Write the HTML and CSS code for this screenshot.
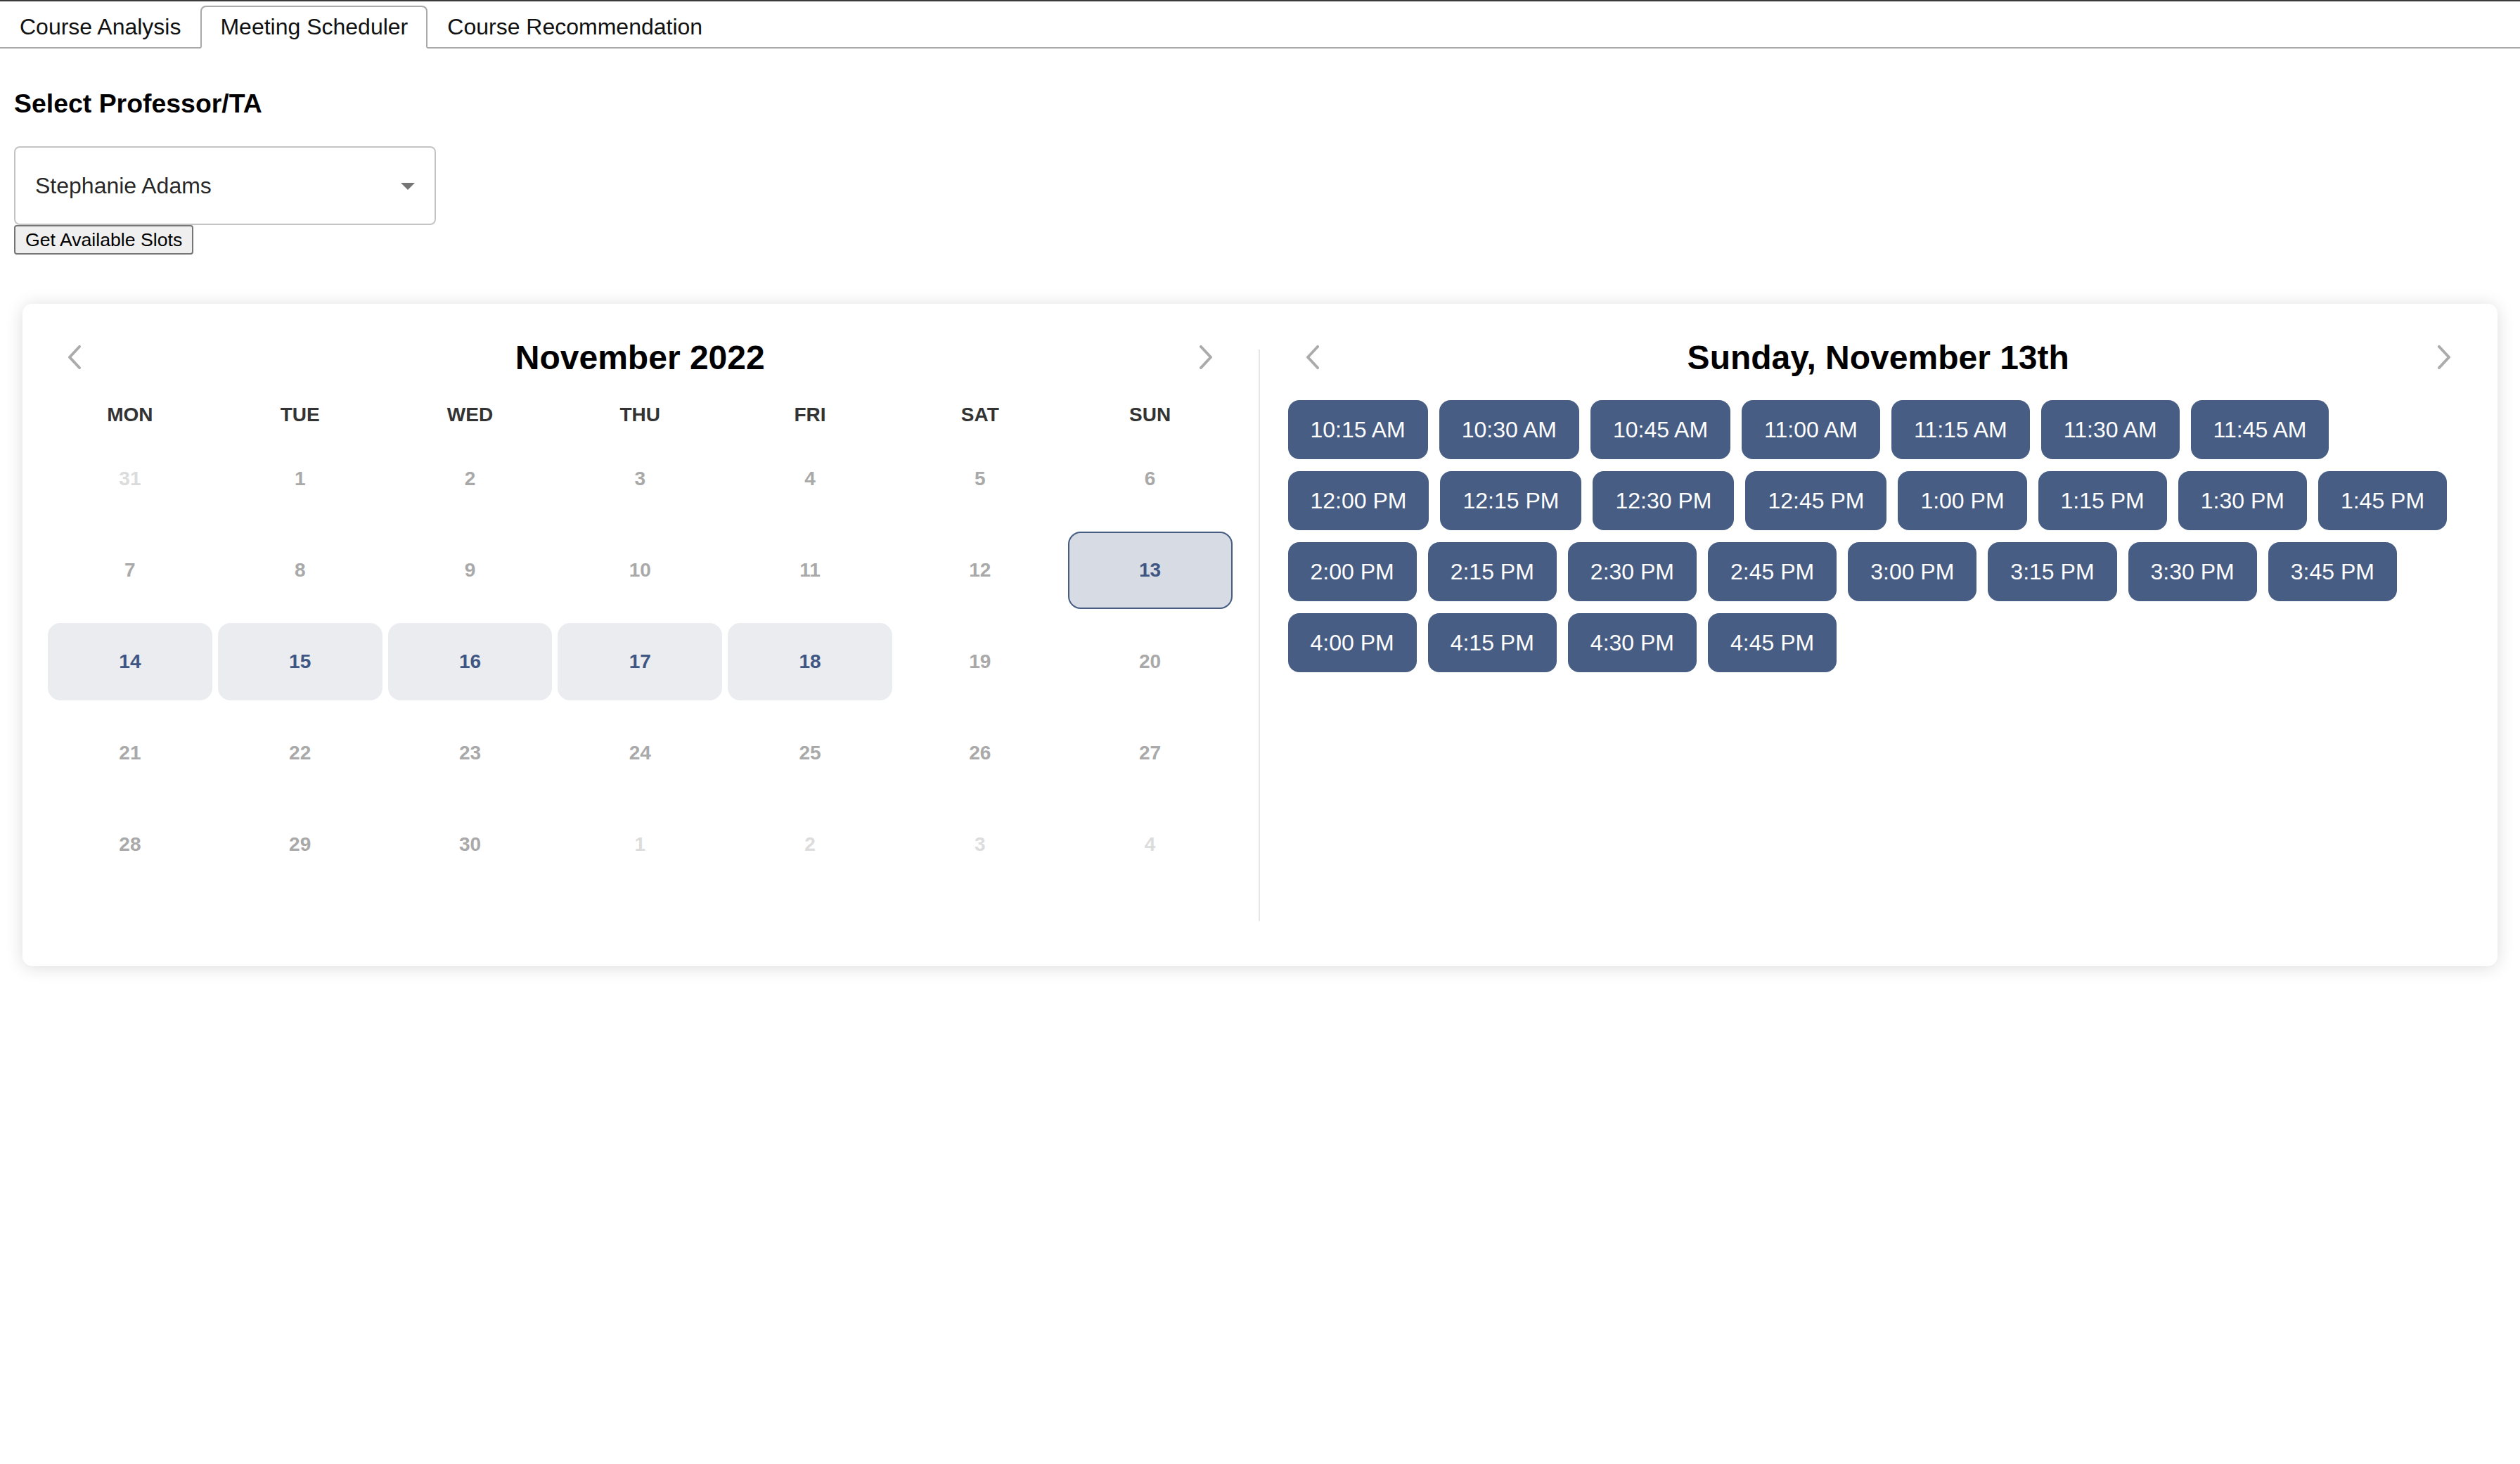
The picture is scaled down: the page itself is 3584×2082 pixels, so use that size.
FILE: index.html
```html
<!DOCTYPE html>
<html>
<head lang="en">
    <meta charset="UTF-8">
    <title>Meeting Scheduler</title>
    <link rel="stylesheet" href="styles.css">
</head>
<body>
<div class="tab">
    <button class="tablinks">Course Analysis</button>
    <button class="tablinks active">Meeting Scheduler</button>
    <button class="tablinks">Course Recommendation</button>
</div>

<div class="tabcontent">
    <h3>Select Professor/TA</h3>
    <div class="select">
        <span>Stephanie Adams</span>
        <svg viewBox="0 0 24 24"><path d="M7 10l5 5 5-5z"></path></svg>
    </div>
    <button class="get-slots">Get Available Slots</button>

    <div class="scheduler">
        <div class="calendar">
            <div class="head">
                <svg class="arrow" viewBox="0 0 20 34"><polyline points="17,2 3,17 17,32"></polyline></svg>
                <span class="title">November 2022</span>
                <svg class="arrow" viewBox="0 0 20 34"><polyline points="3,2 17,17 3,32"></polyline></svg>
            </div>
            <div class="days">
                <div class="dow">MON</div><div class="dow">TUE</div><div class="dow">WED</div><div class="dow">THU</div>
                <div class="dow">FRI</div><div class="dow">SAT</div><div class="dow">SUN</div>

                <div class="day other">31</div><div class="day">1</div><div class="day">2</div><div class="day">3</div>
                <div class="day">4</div><div class="day">5</div><div class="day">6</div>

                <div class="day">7</div><div class="day">8</div><div class="day">9</div><div class="day">10</div>
                <div class="day">11</div><div class="day">12</div><div class="day avail selected">13</div>

                <div class="day avail">14</div><div class="day avail">15</div><div class="day avail">16</div><div class="day avail">17</div>
                <div class="day avail">18</div><div class="day">19</div><div class="day">20</div>

                <div class="day">21</div><div class="day">22</div><div class="day">23</div><div class="day">24</div>
                <div class="day">25</div><div class="day">26</div><div class="day">27</div>

                <div class="day">28</div><div class="day">29</div><div class="day">30</div><div class="day other">1</div>
                <div class="day other">2</div><div class="day other">3</div><div class="day other">4</div>
            </div>
        </div>

        <div class="divider"></div>

        <div class="slots-panel">
            <div class="head">
                <svg class="arrow" viewBox="0 0 20 34"><polyline points="17,2 3,17 17,32"></polyline></svg>
                <span class="title">Sunday, November 13th</span>
                <svg class="arrow" viewBox="0 0 20 34"><polyline points="3,2 17,17 3,32"></polyline></svg>
            </div>
            <div class="slots">
                <button class="slot">10:15 AM</button>
                <button class="slot">10:30 AM</button>
                <button class="slot">10:45 AM</button>
                <button class="slot">11:00 AM</button>
                <button class="slot">11:15 AM</button>
                <button class="slot">11:30 AM</button>
                <button class="slot">11:45 AM</button>
                <button class="slot">12:00 PM</button>
                <button class="slot">12:15 PM</button>
                <button class="slot">12:30 PM</button>
                <button class="slot">12:45 PM</button>
                <button class="slot">1:00 PM</button>
                <button class="slot">1:15 PM</button>
                <button class="slot">1:30 PM</button>
                <button class="slot">1:45 PM</button>
                <button class="slot">2:00 PM</button>
                <button class="slot">2:15 PM</button>
                <button class="slot">2:30 PM</button>
                <button class="slot">2:45 PM</button>
                <button class="slot">3:00 PM</button>
                <button class="slot">3:15 PM</button>
                <button class="slot">3:30 PM</button>
                <button class="slot">3:45 PM</button>
                <button class="slot">4:00 PM</button>
                <button class="slot">4:15 PM</button>
                <button class="slot">4:30 PM</button>
                <button class="slot">4:45 PM</button>
            </div>
        </div>
    </div>
</div>
</body>
</html>
```

FILE: styles.css
```css
*{
    box-sizing: border-box;
}
body{
    margin:0;
    font-family: "Liberation Sans", Arial, Helvetica, sans-serif;
    color:#000;
    background:#fff;
}

/* tabs */
.tab{
    display:flex;
    padding-top:6px;
    border-top:2px solid #3c3c3c;
    border-bottom:2px solid #a9a9a9;
}
.tab .tablinks{
    font-family: inherit;
    font-size:32px;
    line-height:37px;
    padding:10px 26px;
    margin-bottom:-2px;
    color:#111;
    background:none;
    border:2px solid transparent;
    border-radius:8px 8px 0 0;
}
.tab .tablinks.active{
    background:#fff;
    border-color:#a9a9a9;
    border-bottom-color:#fff;
}

.tabcontent{
    padding:0 20px 80px;
}
h3{
    font-size:37.44px;
    line-height:43px;
    margin:57px 0 39px;
}

/* professor select */
.select{
    display:flex;
    align-items:center;
    justify-content:space-between;
    width:600px;
    height:112px;
    padding:0 14px 0 28px;
    border:2px solid rgba(0,0,0,0.23);
    border-radius:8px;
    font-size:32px;
    color:rgba(0,0,0,0.87);
}
.select svg{
    width:48px;
    height:48px;
    fill:rgba(0,0,0,0.54);
}
.get-slots{
    display:block;
    font-family: inherit;
    font-size:26.67px;
    line-height:30px;
    padding:4px 14px;
    color:#000;
    background:#efefef;
    border:2px solid #767676;
    border-radius:4px;
}

/* scheduler card */
.scheduler{
    display:flex;
    margin:70px 12px 0;
    background:#fff;
    border-radius:14px;
    box-shadow:0 2px 24px rgba(0,0,0,0.14);
}
.calendar{
    flex:1;
    padding:48px 37px 118px 36px;
}
.divider{
    width:2px;
    margin:65px 0 64px;
    background:#e6e6e6;
}
.slots-panel{
    flex:1;
    padding:48px 36px 0 40px;
}
.head{
    display:flex;
    align-items:center;
    justify-content:space-between;
    height:56px;
    padding:0 28px;
}
.slots-panel .head{
    padding:0 30px 0 25px;
}
.head .title{
    font-size:48px;
    font-weight:bold;
}
.arrow{
    width:20px;
    height:34px;
    fill:none;
    stroke:#ababab;
    stroke-width:4;
    stroke-linecap:round;
    stroke-linejoin:round;
}

.days{
    display:grid;
    grid-template-columns:repeat(7, 1fr);
    grid-template-rows:32px;
    grid-auto-rows:110px;
    gap:20px 8px;
    margin-top:38px;
}
.dow{
    display:flex;
    align-items:center;
    justify-content:center;
    font-size:28px;
    font-weight:bold;
    color:#333;
}
.day{
    display:flex;
    align-items:center;
    justify-content:center;
    font-size:28px;
    font-weight:bold;
    color:#a9a9a9;
    border-radius:18px;
}
.day.other{
    color:#dcdcdc;
}
.day.avail{
    color:#3f5683;
    background:#ebecf0;
}
.day.selected{
    background:#d6dbe4;
    border:2px solid #475d83;
}

/* time slots */
.slots{
    display:flex;
    flex-wrap:wrap;
    gap:17px 16px;
    margin-top:33px;
}
.slot{
    height:84px;
    padding:0 32px;
    font-family: inherit;
    font-size:32px;
    color:#fff;
    background:#475d83;
    border:none;
    border-radius:16px;
}
```
